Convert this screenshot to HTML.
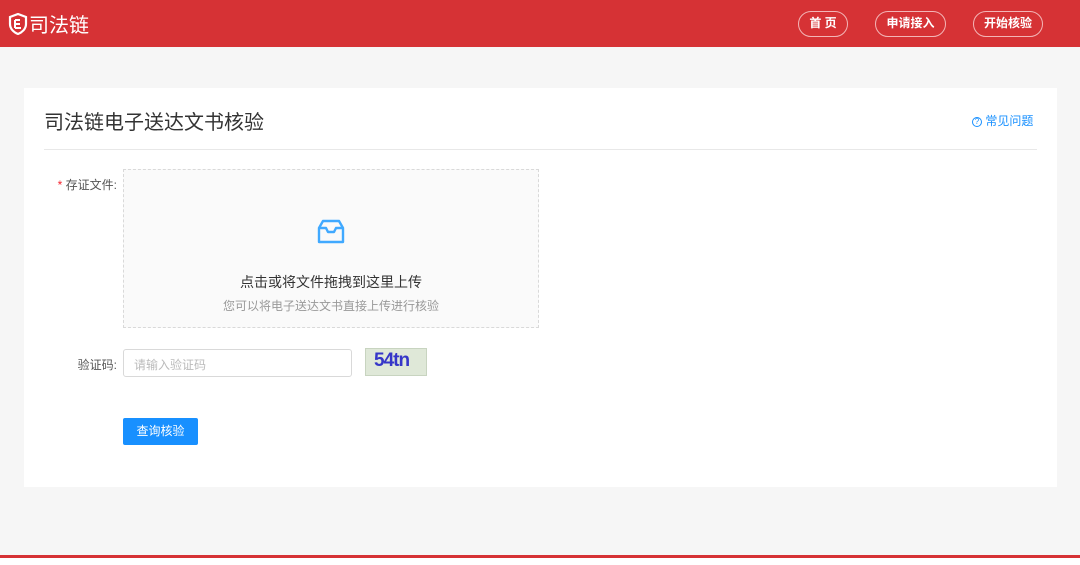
<!DOCTYPE html>
<html><head><meta charset="utf-8"><style>
*{margin:0;padding:0;box-sizing:border-box}
body{width:1080px;height:565px;overflow:hidden;background:#f6f6f6;font-family:"Liberation Sans","Noto Sans CJK SC",sans-serif;position:relative}
.hd{position:absolute;left:0;top:0;width:1080px;height:47px;background:#d63235}
.logo{position:absolute;left:8px;top:9px;color:#fff;font-size:20px;display:flex;align-items:center}
.nav{position:absolute;top:11px;height:26px;border:1.5px solid #f3b5b6;border-radius:13px;color:#fff;font-size:12px;font-weight:bold;text-align:center;line-height:23px}
.card{position:absolute;left:24px;top:88px;width:1033px;height:399px;background:#fff}
.abs{position:absolute}
.lbl{position:absolute;right:940px;font-size:12px;color:#555;white-space:nowrap}
</style></head><body>
<div class="hd">
<div class="logo"><svg width="20" height="22" viewBox="0 0 20 22"><path d="M10 1 L18 4 V11 C18 16 14 19.5 10 21 C6 19.5 2 16 2 11 V4 Z" fill="none" stroke="#fff" stroke-width="2.2"/><path d="M7 7 V15 M7 7 H12 M7 11 H12 M7 15 H13" stroke="#fff" stroke-width="2" fill="none"/></svg><span style="margin-left:1px">司法链</span></div>
<div class="nav" style="left:798px;width:50px">首 页</div>
<div class="nav" style="left:875px;width:71px">申请接入</div>
<div class="nav" style="left:973px;width:70px">开始核验</div>
</div>
<div class="card">
<div class="abs" style="left:20px;top:18px;font-size:20px;color:#333">司法链电子送达文书核验</div>
<div class="abs" style="left:948px;top:24px;font-size:12px;color:#1890ff"><span style="display:inline-block;width:10px;height:10px;border:1px solid #1890ff;border-radius:50%;font-size:8px;line-height:8px;text-align:center;vertical-align:1px">?</span> 常见问题</div>
<div class="abs" style="left:20px;top:61px;width:993px;height:1px;background:#e8e8e8"></div>
<div class="lbl" style="top:88px"><span style="color:#f5222d">*</span> 存证文件:</div>
<div class="abs" style="left:99px;top:81px;width:416px;height:159px;border:1px dashed #d9d9d9;background:#fafafa">
<svg class="abs" style="left:191px;top:46px" width="32" height="32" viewBox="0 0 32 32"><path d="M8 5 H24 L28 12 V26 H4 V12 Z M4 12 H11 L13 16 H19 L21 12 H28" fill="none" stroke="#40a9ff" stroke-width="2.4" stroke-linejoin="round"/></svg>
<div class="abs" style="left:0;width:100%;top:102px;text-align:center;font-size:14px;color:#333">点击或将文件拖拽到这里上传</div>
<div class="abs" style="left:0;width:100%;top:127px;text-align:center;font-size:12px;color:#999">您可以将电子送达文书直接上传进行核验</div>
</div>
<div class="lbl" style="top:268px">验证码:</div>
<div class="abs" style="left:99px;top:261px;width:229px;height:28px;border:1px solid #d9d9d9;border-radius:3px;font-size:12px;color:#bbb;padding:6px 10px">请输入验证码</div>
<div class="abs" style="left:341px;top:260px;width:62px;height:28px;background:#dfe8d8;border:1px solid #c8d4c0;font-size:19px;font-weight:bold;color:#3636c8;padding:1px 0 0 8px;letter-spacing:-1px">54tn</div>
<div class="abs" style="left:99px;top:330px;width:75px;height:27px;background:#1890ff;border-radius:2px;color:#fff;font-size:12px;text-align:center;line-height:27px">查询核验</div>
</div>
<div class="abs" style="left:0;top:555px;width:1080px;height:3px;background:#d63235"></div>
<div class="abs" style="left:0;top:558px;width:1080px;height:7px;background:#fff"></div>
</body></html>
